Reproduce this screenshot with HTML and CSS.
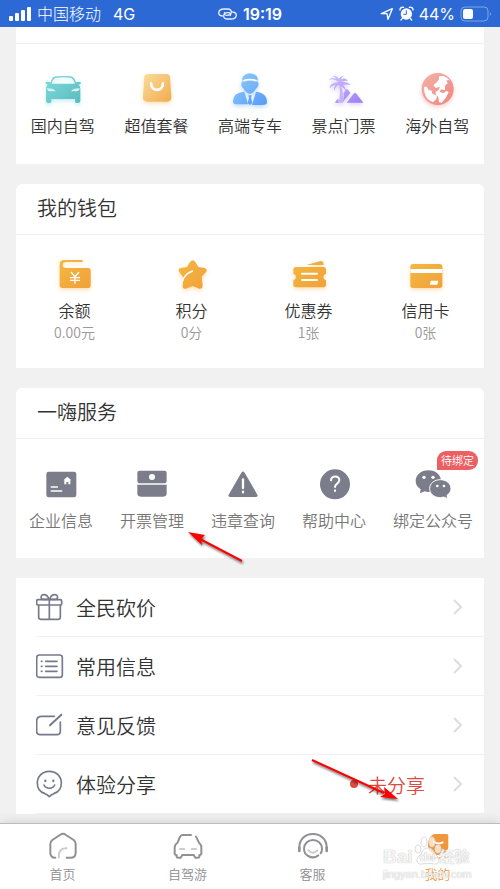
FILE: index.html
```html
<!DOCTYPE html>
<html lang="zh-CN">
<head>
<meta charset="utf-8">
<meta name="viewport" content="width=device-width, initial-scale=1">
<title>我的</title>
<link rel="stylesheet" href="styles.css">
</head>
<body>
<svg class="defs" width="0" height="0" aria-hidden="true">
  <defs>
    <linearGradient id="teal" x1="0" y1="0" x2="1" y2="1"><stop offset="0" stop-color="#7fdcdc"/><stop offset="1" stop-color="#5cb9be"/></linearGradient>
    <linearGradient id="sand" x1="0" y1="0" x2="1" y2="1"><stop offset="0" stop-color="#fbdc9a"/><stop offset="1" stop-color="#f1ab50"/></linearGradient>
    <linearGradient id="blue" x1="0" y1="0" x2="1" y2="1"><stop offset="0" stop-color="#92cdfb"/><stop offset="1" stop-color="#579bf6"/></linearGradient>
    <linearGradient id="violet" x1="0" y1="0" x2="1" y2="1"><stop offset="0" stop-color="#d3c2fa"/><stop offset="1" stop-color="#9a7cf5"/></linearGradient>
    <linearGradient id="rose" x1="0" y1="0" x2="1" y2="1"><stop offset="0" stop-color="#f2b2a9"/><stop offset="1" stop-color="#ef8580"/></linearGradient>
    <linearGradient id="gold" x1="0" y1="0" x2="1" y2="1"><stop offset="0" stop-color="#f3b840"/><stop offset="1" stop-color="#f1a03b"/></linearGradient>
  </defs>
</svg>

<header class="status">
  <div class="status-side">
    <svg width="24" height="16" viewBox="0 0 24 16" fill="#fff" aria-hidden="true"><rect x="1" y="10" width="4" height="5" rx="1"/><rect x="7" y="7" width="4" height="8" rx="1"/><rect x="13" y="4" width="4" height="11" rx="1"/><rect x="19" y="1" width="4" height="14" rx="1"/></svg>
    <span class="carrier">中国移动</span>
    <span>4G</span>
  </div>
  <div class="status-mid">
    <svg width="19" height="12" viewBox="0 0 57 36" fill="none" stroke="#e8effc" stroke-width="4" stroke-linecap="round" aria-hidden="true"><path d="M13 24C5 23 2 18 2 14 3 6 10 3 18 3h10c9 0 13 5 12 10-1 6-7 9-14 9-6 0-8-4-6-8"/><path d="M44 12c8 1 11 6 11 10-1 8-8 11-16 11H29c-9 0-13-5-12-10 1-6 7-9 14-9 6 0 8 4 6 8"/></svg>
    <time>19:19</time>
  </div>
  <div class="status-side status-end">
    <svg width="14" height="14" viewBox="0 0 42 42" fill="none" stroke="#fff" stroke-width="4" stroke-linejoin="round" aria-hidden="true"><path d="M4 20L37 5 24 37l-3-17z"/></svg>
    <svg width="15" height="15" viewBox="0 0 45 45" aria-hidden="true"><circle cx="22" cy="24" r="17" fill="#fff"/><path d="M3 12A8 8 0 0 1 14 4M31 4a8 8 0 0 1 11 8M10 37l-4 5M34 37l4 5" stroke="#fff" stroke-width="4" fill="none" stroke-linecap="round"/><path d="M22 13v12h-9" stroke="#2d69d5" stroke-width="3" fill="none"/></svg>
    <span>44%</span>
    <svg width="32" height="16" viewBox="0 0 32 16" aria-hidden="true"><rect x="1" y="1" width="27" height="14" rx="4" fill="none" stroke="#7ea5e8"/><rect x="3" y="3" width="10" height="10" rx="2" fill="#fff"/><path d="M30 6v4q2-2 0-4z" fill="#7ea5e8"/></svg>
  </div>
</header>

<main class="content">
  <section class="card card-first">
    <div class="card-tail"></div>
    <nav class="grid five">
      <a class="tile" href="#">
        <svg class="icon glow-teal" viewBox="128 210 120 120" aria-hidden="true"><path fill="url(#teal)" fill-rule="evenodd" d="M151 247C156 233 160 230 167 229q22-2 44 0c7 1 11 5 16 18l10-2q7 1 4 6l-6 3q5 5 5 12v36q0 7-7 7h-4q-5 0-5-6v-6h-71v6q0 6-5 6h-4q-7 0-7-7v-36q0-7 5-12l-6-3q-3-5 4-6zM154 251h70c-4-11-8-17-13-18q-22-2-43 0c-6 1-11 7-14 18zM140 265q1 9 10 9h16q-4-9-26-9zM238 265q-22 0-26 9h16q9 0 10-9z"/></svg>
        <span>国内自驾</span>
      </a>
      <a class="tile" href="#">
        <svg class="icon glow-gold" viewBox="409 210 120 120" aria-hidden="true"><path fill="url(#sand)" d="M446 222h54q10 0 11 10l4 60q0 13-13 13h-59q-13 0-13-13l4-60q1-10 12-10z"/><path d="M454 250c2 26 34 26 36 0" fill="none" stroke="#fff" stroke-width="8" stroke-linecap="round"/></svg>
        <span>超值套餐</span>
      </a>
      <a class="tile" href="#">
        <svg class="icon glow-blue" viewBox="-60 210 120 120" aria-hidden="true"><path fill="url(#blue)" d="M-23 239q-1-10 8-15 14-9 30 0 9 5 8 15l-2 5q6 1 4 12-2 8-7 10Q12 276 5 280l-5 2-6-2q-10-5-13-14-6-2-7-10-1-11 5-12zM-17 275l11 38h-30q-15 0-15-8-1-27 34-30zM18 275c24 3 33 14 33 32q0 8-15 8H6z"/><path d="M-21 240q21-8 42 0l-2 5q-19-7-38 0z" fill="#fff"/><path d="M-5 286H5l-2 7 4 17-7 5-7-5 4-17z" fill="#62a5f8"/></svg>
        <span>高端专车</span>
      </a>
      <a class="tile" href="#">
        <svg class="icon glow-violet" viewBox="221 210 120 120" aria-hidden="true"><path d="M265 249q8 27 0 59h12q4-30-7-57z" fill="#c5b2f9"/><path fill="url(#violet)" d="M265 246q-15-13-30-6 7-11 23-3-5-9-14-9 14-3 22 8 5-9 16-9-9 4-10 11 15-7 21 5-10-3-18 3 15-2 26 9-12-3-24 0 9 6 9 17-10-14-21-17-10 4-13 19-3-12 4-18-11 0-18 9-1-17 27-19zM287 269q3-4 6 0l7 10-23 28q5-18 2-27zM311 280q3-4 6 0l22 28h-50zM254 309q3-11 10-13l1 13z"/></svg>
        <span>景点门票</span>
      </a>
      <a class="tile" href="#">
        <svg class="icon glow-rose" viewBox="502 210 120 120" aria-hidden="true"><circle cx="564" cy="267" r="48" fill="url(#rose)"/><path fill="#fff" d="M568 229l12-2q13 5 20 14l-10 0 4 8-8 8 0 14-12-3-4 8 12 3 9-7 6 5-9 17-12 14-8-2-2-15-8-8 0-8 9-5 4-10-13 4-7-8 11-10 6-8zM523 260l9 0 4 9 10 3 2 9 14 6-2 10-10 10Q522 297 523 260z"/></svg>
        <span>海外自驾</span>
      </a>
    </nav>
  </section>

  <section class="card">
    <h2>我的钱包</h2>
    <nav class="grid four">
      <a class="tile" href="#">
        <svg class="icon glow-gold" viewBox="163 225 120 120" aria-hidden="true"><path fill="url(#gold)" d="M190 240h55q2 3 0 6h-48q-11 0-11 9t11 9h66q7 0 7 7v46q0 7-7 7h-78q-8 0-8-8v-62q0-14 13-14z"/><path d="M211 276l12 15 12-15M208 293h30M208 301h30M223 291v20" fill="none" stroke="#fff" stroke-width="4"/></svg>
        <span>余额</span><small>0.00元</small>
      </a>
      <a class="tile" href="#">
        <svg class="icon glow-gold" viewBox="514 225 120 120" aria-hidden="true"><path fill="url(#gold)" d="M568 246q8-10 16 0l9 15 19 3q10 4 4 12l-13 14 3 28q-1 10-10 8l-20-8-20 8q-11 2-10-8l3-24-13-18q-6-9 4-12l19-3z"/><path d="M545 304q7-24 32-31" fill="none" stroke="#fff" stroke-width="4"/></svg>
        <span>积分</span><small>0分</small>
      </a>
      <a class="tile" href="#">
        <svg class="icon glow-gold" viewBox="116 225 120 120" aria-hidden="true"><path fill="url(#gold)" d="M168 255l40-11q9-3 11 4l1 7zM137 261h82q8 0 8 8v12q-8 2-8 10t8 10v12q0 9-8 9h-82q-8 0-8-9v-12q8-2 8-10t-8-10v-12q0-8 8-8z"/><path d="M155 281h45M155 300h45" stroke="#fff" stroke-width="6" stroke-linecap="round"/></svg>
        <span>优惠券</span><small>1张</small>
      </a>
      <a class="tile" href="#">
        <svg class="icon glow-gold" viewBox="467 225 120 120" aria-hidden="true"><rect x="480" y="252" width="96" height="72" rx="8" fill="url(#gold)"/><path d="M480 267h96v12h-96zM542 302h22l-3 12h-23z" fill="#fff"/></svg>
        <span>信用卡</span><small>0张</small>
      </a>
    </nav>
  </section>

  <section class="card">
    <h2>一嗨服务</h2>
    <nav class="services">
      <a class="tile" href="#">
        <svg class="icon" viewBox="125 250 120 120" aria-hidden="true"><rect x="141" y="273" width="90" height="77" rx="7" fill="#7b7d8b"/><path d="M156 319h18M156 331h31" stroke="#fff" stroke-width="5" stroke-linecap="round"/><path d="M204 288l12 11h-3v12h-6v-7h-6v7h-6v-12h-3z" fill="#fff"/></svg>
        <span>企业信息</span>
      </a>
      <a class="tile" href="#">
        <svg class="icon" viewBox="400 250 120 120" aria-hidden="true"><path d="M423 270h74q7 0 7 7v24q0 7-7 7h-74q-7 0-7-7v-24q0-7 7-7zM416 312h88v26q0 10-10 10h-68q-10 0-10-10z" fill="#7b7d8b"/><circle cx="460" cy="289" r="9" fill="#fff"/></svg>
        <span>开票管理</span>
      </a>
      <a class="tile" href="#">
        <svg class="icon" viewBox="673 250 120 120" aria-hidden="true"><path d="M728 276q5-7 10 0l38 66q3 6-4 7h-78q-7-1-4-7z" fill="#7b7d8b"/><path d="M733 296v26M733 333v2" stroke="#fff" stroke-width="7" stroke-linecap="round"/></svg>
        <span>违章查询</span>
      </a>
      <a class="tile" href="#">
        <svg class="icon" viewBox="195 250 120 120" aria-hidden="true"><circle cx="258" cy="311" r="45" fill="#7b7d8b"/><path d="M246 299c1-15 26-15 25 0 0 9-13 10-13 20M258 329v2" fill="none" stroke="#fff" stroke-width="6" stroke-linecap="round"/></svg>
        <span>帮助中心</span>
      </a>
      <a class="tile" href="#">
        <svg class="icon" viewBox="487 250 120 120" aria-hidden="true"><path d="M533 269c23 0 38 14 38 33s-16 32-38 32q-7 0-11-2l-14 6 2-12c-10-6-15-14-15-24 0-19 16-33 38-33z" fill="#7b7d8b"/><path d="M569 297c19 0 32 12 32 27 0 8-5 15-12 20l2 10-12-5-10 2c-19 0-32-12-32-27s13-27 32-27z" fill="#7b7d8b" stroke="#fff" stroke-width="3"/><g fill="#fff"><circle cx="520" cy="290" r="5"/><circle cx="547" cy="290" r="5"/><circle cx="560" cy="316" r="4"/><circle cx="580" cy="316" r="4"/></g></svg>
        <span>绑定公众号</span>
        <em class="badge">待绑定</em>
      </a>
    </nav>
  </section>

  <nav class="list">
    <a class="row" href="#">
      <svg viewBox="108 72 84 84" class="line" aria-hidden="true"><rect x="110" y="92" width="75" height="16" rx="4"/><path d="M116 109v35q0 7 7 7h51q7 0 7-7v-35M148 92v58M147 91h-21c-6-8-2-14 6-14 7 0 12 5 15 14zM149 91h21c6-8 2-14-6-14-7 0-12 5-15 14z"/></svg>
      <span>全民砍价</span>
      <svg class="chev" viewBox="0 0 9 16" aria-hidden="true"><path d="M1 1l7 7-7 7"/></svg>
    </a>
    <a class="row" href="#">
      <svg viewBox="108 246 84 84" class="line" aria-hidden="true"><rect x="110" y="255" width="77" height="67" rx="8"/><path d="M137 274h34M137 289h34M137 304h34M124 274h2M124 289h2M124 304h2"/></svg>
      <span>常用信息</span>
      <svg class="chev" viewBox="0 0 9 16" aria-hidden="true"><path d="M1 1l7 7-7 7"/></svg>
    </a>
    <a class="row" href="#">
      <svg viewBox="108 424 84 84" class="line" aria-hidden="true"><path d="M163 440h-38q-15 0-15 15v30q0 10 10 10h51q10 0 10-10v-28"/><path d="M150 467l34-32" stroke-width="6"/></svg>
      <span>意见反馈</span>
      <svg class="chev" viewBox="0 0 9 16" aria-hidden="true"><path d="M1 1l7 7-7 7"/></svg>
    </a>
    <a class="row" href="#">
      <svg viewBox="108 148 84 84" class="line" aria-hidden="true"><path d="M148 152c21 0 36 15 36 35 0 16-9 28-23 32q-8 3-13 9-5-6-13-9c-14-4-23-16-23-32 0-20 15-35 36-35zM132 193c6 13 26 13 32 0"/><path d="M136 180v1M160 180v1" stroke-width="7"/></svg>
      <span>体验分享</span>
      <strong class="todo">未分享</strong>
      <svg class="chev" viewBox="0 0 9 16" aria-hidden="true"><path d="M1 1l7 7-7 7"/></svg>
    </a>
  </nav>
</main>

<nav class="tabs">
  <a href="#">
    <svg viewBox="140 330 96 96" aria-hidden="true"><path d="M165 413q-15 0-15-15v-27q0-6 6-11l23-15q9-7 18 0l23 15q6 5 6 11v27q0 15-15 15h-12"/><path d="M176 412c-2-18 7-28 22-27" class="pale"/></svg>
    <span>首页</span>
  </a>
  <a href="#">
    <svg viewBox="515 330 96 96" aria-hidden="true"><path d="M572 345h-25q-6 0-8 6l-8 18q-8 5-8 13v18q0 5 6 6v5q0 2 4 2h8l5-8h34l5 8h8q4 0 4-2v-5q6-1 6-6v-18q0-8-7-14l-9-18"/><path d="M539 387h13M574 387h13" class="pale"/></svg>
    <span>自驾游</span>
  </a>
  <a href="#">
    <svg viewBox="140 330 96 96" aria-hidden="true"><path d="M147 384v-2c0-24 17-40 41-40s41 16 41 40v2"/><path d="M147 383v10M229 383v10" stroke-width="8"/><path d="M204 406c-20 15-43-1-43-20 0-15 12-26 27-26s27 11 27 26q0 9-4 14"/><path d="M174 391q13 14 27 0" class="pale"/></svg>
    <span>客服</span>
  </a>
  <a href="#" class="active" aria-current="page">
    <svg viewBox="515 330 96 96" aria-hidden="true"><path class="solid" d="M553 342h36q5 0 5 5v31c0 16-14 27-31 27s-30-13-30-30 8-30 20-33zM532 408l17 1 14 4 15-4 16-1v8h-62z"/><path d="M551 365q12 10 26 2" class="smile"/></svg>
    <span>我的</span>
  </a>
</nav>

<div class="watermark" aria-hidden="true">
  <svg width="30" height="30" viewBox="0 0 30 30"><g fill="#fff" fill-opacity=".7" stroke="#ddd"><ellipse cx="4" cy="13" rx="3" ry="4"/><ellipse cx="10" cy="6" rx="3" ry="5"/><ellipse cx="18" cy="6" rx="3" ry="5"/><ellipse cx="24" cy="13" rx="3" ry="4"/><path d="M14 12c5 0 6 5 9 8 4 4 1 9-3 8-4-1-8-1-12 0-5 1-7-4-3-8 3-3 4-8 9-8z"/></g></svg>
  <b><i>Bai</i><i class="du">du</i><i>经验</i></b>
  <span>jingyan.baidu.com</span>
</div>

<svg class="pointer pointer-invoice" width="60" height="36" viewBox="0 0 60 36" aria-hidden="true"><path d="M56 31L14 9" stroke="#f00" stroke-width="2"/><path d="M2 2l17 3-4 4 1 6z" fill="#f00"/></svg>
<svg class="pointer pointer-mine" width="92" height="46" viewBox="0 0 92 46" aria-hidden="true"><path d="M2 3l72 33" stroke="#f00" stroke-width="2"/><path d="M88 42l-18-2 5-3-1-7z" fill="#f00"/></svg>
</body>
</html>
```

FILE: styles.css
```css
* { box-sizing: border-box; }

body {
  position: relative;
  display: flex;
  flex-direction: column;
  min-height: 100vh;
  margin: 0;
  background: #f1f1f1;
  color: #333;
  font-family: "Noto Sans CJK SC", sans-serif;
  font-weight: 350;
}

a { color: inherit; text-decoration: none; }
svg { flex: none; display: block; }
.defs { position: absolute; }

.status {
  display: flex;
  align-items: center;
  height: 27px;
  padding: 0 8px;
  background: #2d69d5;
  color: #fff;
  font: 16px/24px Inter, "Noto Sans CJK SC", sans-serif;
}
.status-side { flex: 1; display: flex; align-items: center; gap: 5px; }
.status-end { justify-content: flex-end; }
.carrier { margin-right: 7px; font-weight: 300; }
.status-mid { display: flex; align-items: center; gap: 6px; font-weight: 600; }

.content { flex: 1; padding: 0 16px; }

.card {
  margin-bottom: 20px;
  background: #fff;
  border-radius: 6px 6px 0 0;
}
.card-first { border-radius: 0; }
.card-tail { height: 17px; border-bottom: 1px solid #f0f0f0; }

h2 {
  margin: 0;
  padding: 9px 21px 11px;
  border-bottom: 1px solid #f0f0f0;
  font-size: 20px;
  line-height: 30px;
  font-weight: 350;
}

.grid { display: grid; }
.five { grid-template-columns: repeat(5, 1fr); padding: 26px 0 27px; }
.four { grid-template-columns: repeat(4, 1fr); padding: 20px 0 26px; }
.services { display: flex; justify-content: space-between; padding: 25px 11px 26px 13px; color: #777; }

.tile {
  position: relative;
  display: flex;
  flex-direction: column;
  align-items: center;
  font-size: 16px;
  line-height: 24px;
}
.tile .icon { width: 40px; height: 40px; margin-bottom: 3px; }
.tile small { color: #999; font-size: 14px; line-height: 20px; }
.services .tile .icon { margin-bottom: 4px; }

.glow-teal { filter: drop-shadow(0 2px 2px #7fdcdc80); }
.glow-gold { filter: drop-shadow(0 2px 2px #f3b04060); }
.glow-blue { filter: drop-shadow(0 2px 2px #7ab8fb80); }
.glow-violet { filter: drop-shadow(0 2px 2px #b59ff880); }
.glow-rose { filter: drop-shadow(0 2px 2px #f09a9480); }

.badge {
  position: absolute;
  top: -13px;
  right: -5px;
  padding: 0 4px;
  border-radius: 9px 9px 9px 0;
  background: #ec6063;
  color: #fff;
  font-size: 11px;
  line-height: 19px;
  font-style: normal;
  white-space: nowrap;
}

.list { padding-left: 20px; background: #fff; }
.row {
  display: flex;
  align-items: center;
  gap: 12px;
  height: 59px;
  padding-right: 22px;
  border-bottom: 1px solid #f0f0f0;
  font-size: 20px;
}
.row > span { flex: 1; }
.line { width: 28px; height: 28px; fill: none; stroke: #77798a; stroke-width: 5; stroke-linecap: round; stroke-linejoin: round; }
.chev { width: 9px; height: 16px; fill: none; stroke: #ddd; stroke-width: 2; }
.todo {
  display: flex;
  align-items: center;
  gap: 10px;
  margin-right: 16px;
  color: #dd4a43;
  font-size: 19px;
  font-weight: 350;
}
.todo::before { content: ""; width: 8px; height: 8px; border-radius: 50%; background: #dd4a43; }

.tabs {
  display: flex;
  height: 66px;
  border-top: 1px solid #bbb;
  background: #fff;
  box-shadow: 0 -2px 10px #0000001c;
  color: #8e8e92;
  font-size: 13px;
  line-height: 20px;
}
.tabs a { flex: 1; display: flex; flex-direction: column; align-items: center; padding-top: 6px; }
.tabs svg { width: 32px; height: 32px; margin-bottom: 2px; fill: none; stroke: #919195; stroke-width: 6; stroke-linecap: round; }
.tabs .pale { stroke: #ccc; }
.tabs .active { color: #ef973c; }
.tabs .solid { fill: #f0973b; stroke: none; }
.tabs .smile { stroke: #fff; }

.watermark {
  position: absolute;
  right: 28px;
  bottom: 9px;
  width: 89px;
  color: #ffffffd9;
  font-family: "Liberation Sans", "Noto Sans CJK SC", sans-serif;
  text-shadow: 0 0 1px #bbb, 0 0 1px #ddd;
  pointer-events: none;
}
.watermark svg { position: absolute; left: 31px; top: -10px; }
.watermark b { position: relative; display: flex; align-items: center; font-size: 19px; line-height: 22px; white-space: nowrap; }
.watermark i { font-style: normal; }
.watermark .du { padding: 0 4px 0 7px; font-size: 13px; }
.watermark i:last-child { font-size: 15px; }
.watermark span { display: block; font-size: 11px; line-height: 12px; }

.pointer { position: absolute; fill: none; filter: drop-shadow(1px 2px 1px #0008); }
.pointer-invoice { left: 186px; top: 530px; }
.pointer-mine { left: 310px; top: 757px; }
```
